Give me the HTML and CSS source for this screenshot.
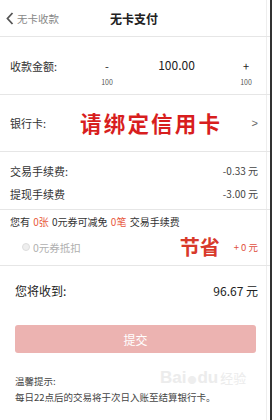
FILE: index.html
```html
<!DOCTYPE html>
<html lang="zh">
<head>
<meta charset="utf-8">
<title>无卡支付</title>
<link rel="stylesheet" href="styles.css">
</head>
<body>
<div class="page">
  <header class="topbar">
    <div class="back">
      <svg class="chev" width="8" height="13" viewBox="0 0 8 13"><polyline points="6.5,1 1.5,6.5 6.5,12" fill="none" stroke="#555" stroke-width="1.8"/></svg>
      <span>无卡收款</span>
    </div>
    <div class="title">无卡支付</div>
  </header>

  <section class="amount">
    <div class="label">收款金额:</div>
    <div class="step"><div class="sign">-</div><div class="small">100</div></div>
    <div class="value">100.00</div>
    <div class="step"><div class="sign">+</div><div class="small">100</div></div>
  </section>

  <section class="bank">
    <div class="label">银行卡:</div>
    <div class="bind">请绑定信用卡</div>
    <div class="arrow">&gt;</div>
  </section>

  <section class="fees">
    <div class="fee"><span>交易手续费:</span><span>-0.33 元</span></div>
    <div class="fee"><span>提现手续费</span><span>-3.00 元</span></div>
  </section>

  <section class="coupon">
    <div class="have">您有 <em>0张</em> 0元券可减免 <em>0笔</em> 交易手续费</div>
    <div class="use">
      <span class="radio"></span>
      <span class="usetext">0元券抵扣</span>
      <span class="save">节省</span>
      <span class="plus">+ 0 元</span>
    </div>
  </section>

  <section class="receive">
    <span>您将收到:</span>
    <span>96.67 元</span>
  </section>

  <div class="submit">提交</div>

  <div class="tips">
    <div>温馨提示:</div>
    <div>每日22点后的交易将于次日入账至结算银行卡。</div>
  </div>

  <div class="mark"><span class="bai">Bai</span><span class="paw">&#9679;</span><span class="bai">du</span><span class="jy">经验</span></div>
</div>
</body>
</html>
```

FILE: styles.css
```css
* { box-sizing: border-box; }
html, body { margin: 0; padding: 0; background: #fff; }
body {
  font-family: "Noto Sans CJK SC", "Liberation Sans", sans-serif;
  color: #333;
  width: 272px;
  height: 420px;
  overflow: hidden;
}
.page {
  position: relative;
  width: 272px;
  height: 420px;
  border-right: 2px solid #333;
  box-shadow: inset -3px 0 0 #fff, inset -4px 0 0 #eee;
  background: #fff;
}
.topbar {
  position: relative;
  height: 37px;
  border-bottom: 1px solid #e6e6e6;
  display: flex;
  align-items: center;
  justify-content: center;
}
.back {
  position: absolute;
  left: 6px;
  top: 0;
  height: 36px;
  display: flex;
  align-items: center;
  gap: 3px;
  font-size: 10.5px;
  color: #888;
}
.chev { display: block; }
.title {
  font-size: 12px;
  font-weight: 700;
  color: #222;
  margin-right: 2px;
}
.label { font-size: 11px; color: #333; line-height: 16px; }
.amount {
  height: 58px;
  display: flex;
  align-items: flex-start;
  padding: 21px 12px 0 10px;
  border-bottom: 1px solid #e6e6e6;
}
.amount .label { width: 85px; }
.step { width: 24px; text-align: center; }
.sign { font-size: 11px; line-height: 16px; color: #222; }
.small { font-size: 7px; line-height: 10px; margin-top: 3px; color: #555; }
.value { flex: 1; text-align: center; font-size: 12px; line-height: 14px; color: #222; }
.bank {
  height: 57px;
  display: flex;
  align-items: center;
  padding: 0 12px 0 10px;
  border-bottom: 1px solid #e6e6e6;
}
.bank .label { width: 70px; }
.bind {
  flex: 1;
  font-size: 21.5px;
  font-weight: 700;
  letter-spacing: 2.2px;
  color: #d81e1e;
  line-height: 26px;
}
.arrow { font-size: 11px; color: #666; font-family: "Liberation Sans", sans-serif; }
.fees {
  padding: 7px 12px 4px 10px;
  border-bottom: 1px solid #e6e6e6;
}
.fee {
  height: 23px;
  display: flex;
  align-items: center;
  justify-content: space-between;
  font-size: 11px;
  color: #333;
}
.fee span:last-child { font-size: 10px; color: #444; }
.coupon {
  padding: 4px 12px 4px 10px;
  border-bottom: 1px solid #e6e6e6;
}
.have { font-size: 10px; line-height: 16px; color: #333; word-spacing: 1px; }
.have em { font-style: normal; color: #e8593d; }
.use {
  height: 28px;
  margin-top: 3px;
  display: flex;
  align-items: center;
  padding-left: 12px;
}
.radio {
  width: 8px;
  height: 8px;
  border-radius: 50%;
  background: #eee;
  border: 1px solid #ddd;
  margin-right: 3px;
}
.usetext { font-size: 10.5px; color: #b0b0b0; flex: 1; }
.save {
  font-size: 20px;
  font-weight: 700;
  color: #d8392a;
  line-height: 26px;
  margin-right: 14px;
}
.plus { font-size: 9.5px; color: #e05040; }
.receive {
  height: 48px;
  display: flex;
  align-items: center;
  justify-content: space-between;
  padding: 0 12px 0 15px;
  font-size: 12px;
  color: #222;
}
.submit {
  margin: 11px 14px 0 15px;
  height: 28px;
  border-radius: 3px;
  background: #ecb3b1;
  color: #fff;
  font-size: 12px;
  display: flex;
  align-items: center;
  justify-content: center;
}
.tips {
  margin-top: 20px;
  padding-left: 15px;
  font-size: 9.5px;
  line-height: 16px;
  color: #444;
}
.mark {
  position: absolute;
  left: 160px;
  top: 368px;
  display: flex;
  align-items: baseline;
  color: #e4e4e4;
  pointer-events: none;
}
.bai { font-family: "Liberation Sans", sans-serif; font-size: 17px; font-weight: 700; opacity: 0.7; }
.paw { font-size: 9px; margin: 0 1px; opacity: 0.6; }
.jy { font-size: 13px; margin-left: 2px; opacity: 0.7; }
```
